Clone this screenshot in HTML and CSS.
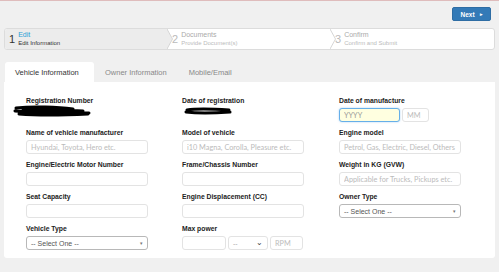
FILE: index.html
```html
<html lang="en">
<head>
  <meta charset="UTF-8">
  <title>Vehicle Information</title>
  <link rel="stylesheet" href="styles.css">
</head>
<body>
  <div class="topbar">
    <button class="btn-next">Next <span class="caret">▸</span></button>
  </div>

  <!-- Wizard steps -->
  <ol class="steps">
    <li class="step current">
      <span class="num">1</span>
      <div class="step-text">
        <div class="step-title">Edit</div>
        <div class="step-sub">Edit Information</div>
      </div>
      <svg class="chev" width="6" height="20" viewBox="0 0 6 20"><polygon points="0,0 5.5,10 0,20" fill="#ececec"/><polyline points="0,0 5.5,10 0,20" fill="none" stroke="#d6d6d6" stroke-width="1"/></svg>
    </li>
    <li class="step">
      <span class="num">2</span>
      <div class="step-text">
        <div class="step-title">Documents</div>
        <div class="step-sub">Provide Document(s)</div>
      </div>
      <svg class="chev" width="6" height="20" viewBox="0 0 6 20"><polygon points="0,0 5.5,10 0,20" fill="#fff"/><polyline points="0,0 5.5,10 0,20" fill="none" stroke="#d6d6d6" stroke-width="1"/></svg>
    </li>
    <li class="step">
      <span class="num">3</span>
      <div class="step-text">
        <div class="step-title">Confirm</div>
        <div class="step-sub">Confirm and Submit</div>
      </div>
    </li>
  </ol>

  <ul class="tabs">
    <li class="tab active">Vehicle Information</li>
    <li class="tab">Owner Information</li>
    <li class="tab">Mobile/Email</li>
  </ul>

  <div class="panel">
    <div class="form-grid">
      <div class="field">
        <label>Registration Number</label>
        <svg class="redact redact-1" width="80" height="13" viewBox="0 0 80 13">
          <path d="M3 4 C20 2 45 3 60 5 M2 7 C25 9 50 8 76 9 M6 10 C30 12 55 11 75 10 M10 5 C30 6 50 6 70 7" stroke="#000" stroke-width="3" fill="none" stroke-linecap="round"/>
        </svg>
      </div>
      <div class="field">
        <label>Date of registration</label>
        <svg class="redact redact-2" width="48" height="10" viewBox="0 0 48 10">
          <path d="M3 4 C15 2 30 3 45 4 M2 6 C18 8 32 7 46 6" stroke="#000" stroke-width="3" fill="none" stroke-linecap="round"/>
        </svg>
      </div>
      <div class="field">
        <label>Date of manufacture</label>
        <div class="ctrl-row">
          <input class="input focus w-yyyy" placeholder="YYYY">
          <input class="input w-mm" placeholder="MM">
        </div>
      </div>

      <div class="field">
        <label>Name of vehicle manufacturer</label>
        <input class="input" placeholder="Hyundai, Toyota, Hero etc.">
      </div>
      <div class="field">
        <label>Model of vehicle</label>
        <input class="input" placeholder="i10 Magna, Corolla, Pleasure etc.">
      </div>
      <div class="field">
        <label>Engine model</label>
        <input class="input" placeholder="Petrol, Gas, Electric, Diesel, Others">
      </div>

      <div class="field">
        <label>Engine/Electric Motor Number</label>
        <input class="input">
      </div>
      <div class="field">
        <label>Frame/Chassis Number</label>
        <input class="input">
      </div>
      <div class="field">
        <label>Weight in KG (GVW)</label>
        <input class="input" placeholder="Applicable for Trucks, Pickups etc.">
      </div>

      <div class="field">
        <label>Seat Capacity</label>
        <input class="input">
      </div>
      <div class="field">
        <label>Engine Displacement (CC)</label>
        <input class="input">
      </div>
      <div class="field">
        <label>Owner Type</label>
        <div class="select">-- Select One --<span class="arrow">▾</span></div>
      </div>

      <div class="field">
        <label>Vehicle Type</label>
        <div class="select">-- Select One --<span class="arrow">▾</span></div>
      </div>
      <div class="field">
        <label>Max power</label>
        <div class="ctrl-row">
          <input class="input w-power">
          <div class="select light w-unit">--<span class="arrow v">⌄</span></div>
          <input class="input w-rpm" placeholder="RPM">
        </div>
      </div>
      <div class="field"></div>
    </div>
  </div>
</body>
</html>
```

FILE: styles.css
```css
* { box-sizing: border-box; margin: 0; padding: 0; }
body {
  font-family: "Liberation Sans", Arial, sans-serif;
  background: #f0f0f0;
  color: #333;
  border-top: 1px solid #dfbcbc;
  width: 499px;
  height: 272px;
  overflow: hidden;
}
.topbar {
  display: flex;
  justify-content: flex-end;
  padding: 6px 8px 0 0;
  height: 27px;
}
.btn-next {
  width: 39px;
  height: 14px;
  background: #337ab7;
  border: 1px solid #2e6da4;
  border-radius: 2px;
  color: #fff;
  font-family: "Liberation Sans", Arial, sans-serif;
  font-size: 6.5px;
  font-weight: bold;
  display: flex;
  align-items: center;
  justify-content: center;
  gap: 5px;
}
.btn-next .caret { font-size: 5px; }

/* steps */
.steps {
  list-style: none;
  display: flex;
  margin: 0 4px;
  height: 22px;
  border: 1px solid #dcdcdc;
  border-radius: 3px;
  background: #fff;
}
.step {
  flex: 1;
  position: relative;
  display: flex;
  align-items: center;
  padding-left: 4px;
  gap: 3px;
  color: #bbb;
}
.step.current { background: #ececec; color: #333; border-radius: 2px 0 0 2px; }
.step .num { font-size: 11px; line-height: 1; }
.step-title { font-size: 7px; line-height: 9px; color: #aaa; }
.step-sub { font-size: 6px; line-height: 9px; color: #bbb; }
.step.current .step-title { color: #2a9fd6; }
.step.current .step-sub { color: #333; }
.chev {
  position: absolute;
  right: -5px;
  top: 0;
  z-index: 2;
}

/* tabs */
.tabs {
  list-style: none;
  display: flex;
  margin: 12px 4px 0;
  height: 20px;
}
.tab {
  font-size: 7.5px;
  color: #888;
  padding: 0 11px;
  display: flex;
  align-items: center;
}
.tab.active {
  background: #fff;
  color: #333;
  border-radius: 3px 3px 0 0;
  padding: 0 10px;
  width: 89px;
  margin-left: 1px;
}

/* panel */
.panel {
  background: #fff;
  margin: 0 4px;
  height: 176px;
  border-radius: 0 0 3px 3px;
  padding: 15px 0 0 22px;
}
.form-grid {
  display: grid;
  grid-template-columns: 156px 157px 156px;
  row-gap: 7px;
}
.field { display: flex; flex-direction: column; }
.field label {
  font-size: 6.8px;
  font-weight: bold;
  line-height: 8px;
  height: 8px;
  margin-bottom: 3px;
  color: #222;
}
.input, .select {
  width: 122px;
  height: 14px;
  border: 1px solid #e3e3e3;
  border-radius: 3px;
  padding: 0 4px;
  font-family: Lato, "Liberation Sans", sans-serif;
  font-size: 7.3px;
  color: #555;
  background: #fff;
}
.input::placeholder { color: #bbb; }
.ctrl-row { display: flex; gap: 2px; }
.w-yyyy { width: 61px; }
.w-mm { width: 27px; }
.w-power { width: 44px; }
.w-unit { width: 40px; }
.w-rpm { width: 33px; }
.input.focus {
  background: #ffffe0;
  border-color: #66afe9;
  box-shadow: 0 0 2px rgba(102, 175, 233, 0.6);
}
.input.focus::placeholder { color: #999; }
.select {
  display: flex;
  align-items: center;
  justify-content: space-between;
  border-color: #b8b8b8;
  font-family: "Liberation Sans", Arial, sans-serif;
  font-size: 7px;
  color: #555;
}
.select.light { border-color: #e3e3e3; color: #aaa; }
.select .arrow { font-size: 5px; color: #777; }
.select .arrow.v { font-size: 8px; line-height: 4px; color: #444; }
.redact { display: block; }
.redact-1 { margin: -4px 0 0 -13px; }
.redact-2 { margin: -2px 0 0 2px; }
```
